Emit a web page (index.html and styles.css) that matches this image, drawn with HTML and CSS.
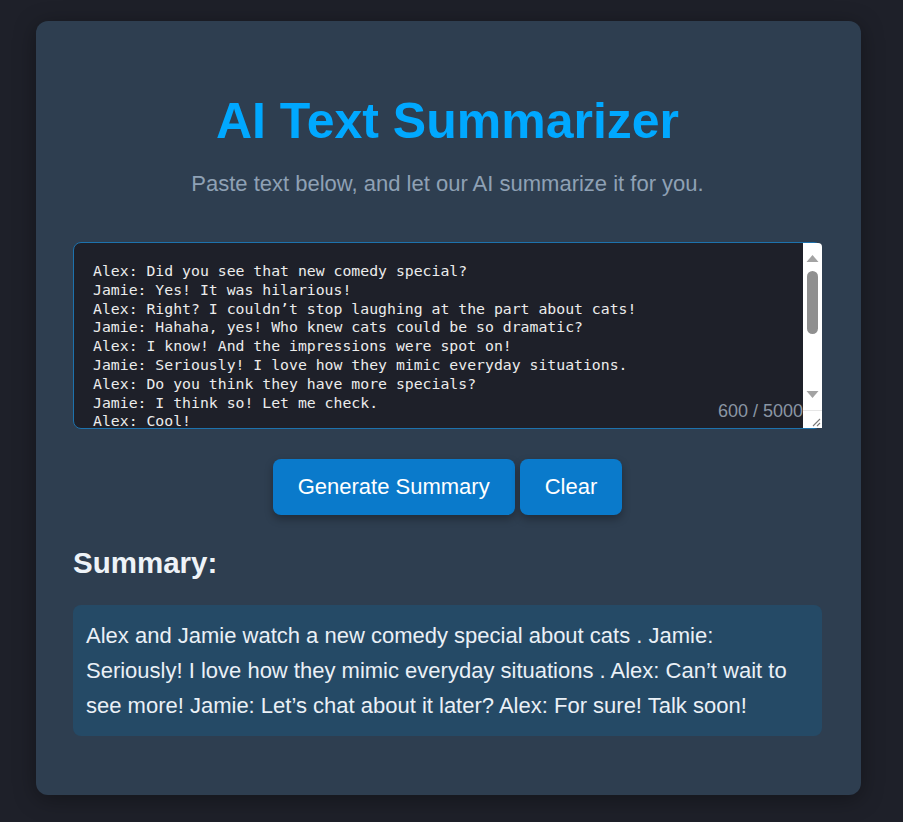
FILE: index.html
```html
<!DOCTYPE html>
<html lang="en">
<head>
<meta charset="utf-8">
<title>AI Text Summarizer</title>
<link rel="stylesheet" href="styles.css">
</head>
<body>
<main class="card">
  <h1 class="title">AI Text Summarizer</h1>
  <p class="subtitle">Paste text below, and let our AI summarize it for you.</p>
  <div class="input-wrap">
    <textarea class="input" spellcheck="false">Alex: Did you see that new comedy special?
Jamie: Yes! It was hilarious!
Alex: Right? I couldn’t stop laughing at the part about cats!
Jamie: Hahaha, yes! Who knew cats could be so dramatic?
Alex: I know! And the impressions were spot on!
Jamie: Seriously! I love how they mimic everyday situations.
Alex: Do you think they have more specials?
Jamie: I think so! Let me check.
Alex: Cool!
Jamie: They have two more on the same platform.
Alex: Can’t wait to see more!
Jamie: Let’s chat about it later?
Alex: For sure! Talk soon!</textarea>
    <span class="counter">600 / 5000</span>
    <svg class="scrollbar" width="19" height="185" viewBox="0 0 19 185" aria-hidden="true">
      <rect x="0" y="0" width="19" height="185" fill="#ffffff"/>
      <path d="M3.5 19 L9.5 12 L15.5 19 Z" fill="#a3a3a3"/>
      <rect x="4" y="28" width="11" height="63" rx="5.5" fill="#8f8f8f"/>
      <path d="M3.5 148 L9.5 155 L15.5 148 Z" fill="#a3a3a3"/>
      <line x1="0" y1="167.5" x2="19" y2="167.5" stroke="#e6e6e6" stroke-width="1"/>
      <path d="M10 183 L17 176 M14 183 L17 180" stroke="#7a7a7a" stroke-width="1.1" fill="none"/>
    </svg>
  </div>
  <div class="actions">
    <button class="btn" type="button">Generate Summary</button>
    <button class="btn" type="button">Clear</button>
  </div>
  <h2 class="summary-title">Summary:</h2>
  <div class="summary">Alex and Jamie watch a new comedy special about cats . Jamie: Seriously! I love how they mimic everyday situations . Alex: Can’t wait to see more! Jamie: Let’s chat about it later? Alex: For sure! Talk soon!</div>
</main>
</body>
</html>
```

FILE: styles.css
```css
html, body {
  margin: 0;
  padding: 0;
}
body {
  background: #1e2029;
  font-family: "Liberation Sans", Arial, sans-serif;
  min-height: 822px;
}
.card {
  margin: 21px 42px 0 36px;
  padding: 40px 39px 40px 37px;
  background: #2e3e50;
  border-radius: 12px;
  box-shadow: 0 4px 22px rgba(0, 0, 0, 0.35);
  box-sizing: border-box;
}
.title {
  margin: 31px 0 0;
  font-size: 50px;
  line-height: 58px;
  font-weight: bold;
  color: #00a8ff;
  text-align: center;
}
.subtitle {
  margin: 22px 0 0;
  font-size: 22px;
  line-height: 24px;
  color: #8fa1b5;
  text-align: center;
}
.input-wrap {
  position: relative;
  margin-top: 46px;
}
.input {
  display: block;
  width: 100%;
  height: 187px;
  box-sizing: border-box;
  margin: 0;
  padding: 19px 19px;
  background: #1e2029;
  color: #ececec;
  border: 1px solid #1d72ad;
  border-radius: 8px;
  font-family: "DejaVu Sans Mono", "Liberation Mono", monospace;
  font-size: 14.8px;
  line-height: 18.8px;
  resize: none;
  overflow: hidden;
  outline: none;
  white-space: pre;
}
.counter {
  position: absolute;
  right: 19px;
  bottom: 8px;
  font-size: 18px;
  line-height: 20px;
  color: #8a96a4;
}
.scrollbar {
  position: absolute;
  top: 1px;
  right: 0;
  border-top-right-radius: 4px;
}
.actions {
  display: flex;
  justify-content: center;
  gap: 5px;
  margin-top: 30px;
}
.btn {
  margin: 0;
  padding: 15px 25px;
  border: none;
  border-radius: 8px;
  background: #0a7acb;
  color: #ffffff;
  font-family: "Liberation Sans", Arial, sans-serif;
  font-size: 22px;
  line-height: 26px;
  box-shadow: 0 4px 8px rgba(0, 0, 0, 0.3);
  cursor: pointer;
}
.summary-title {
  margin: 31px 0 0;
  font-size: 29.5px;
  line-height: 34px;
  font-weight: bold;
  color: #eef3f8;
}
.summary {
  margin: 25px 0 19px;
  padding: 13px;
  background: #254a66;
  border-radius: 8px;
  color: #eaf0f6;
  font-size: 22px;
  line-height: 35px;
}
```
